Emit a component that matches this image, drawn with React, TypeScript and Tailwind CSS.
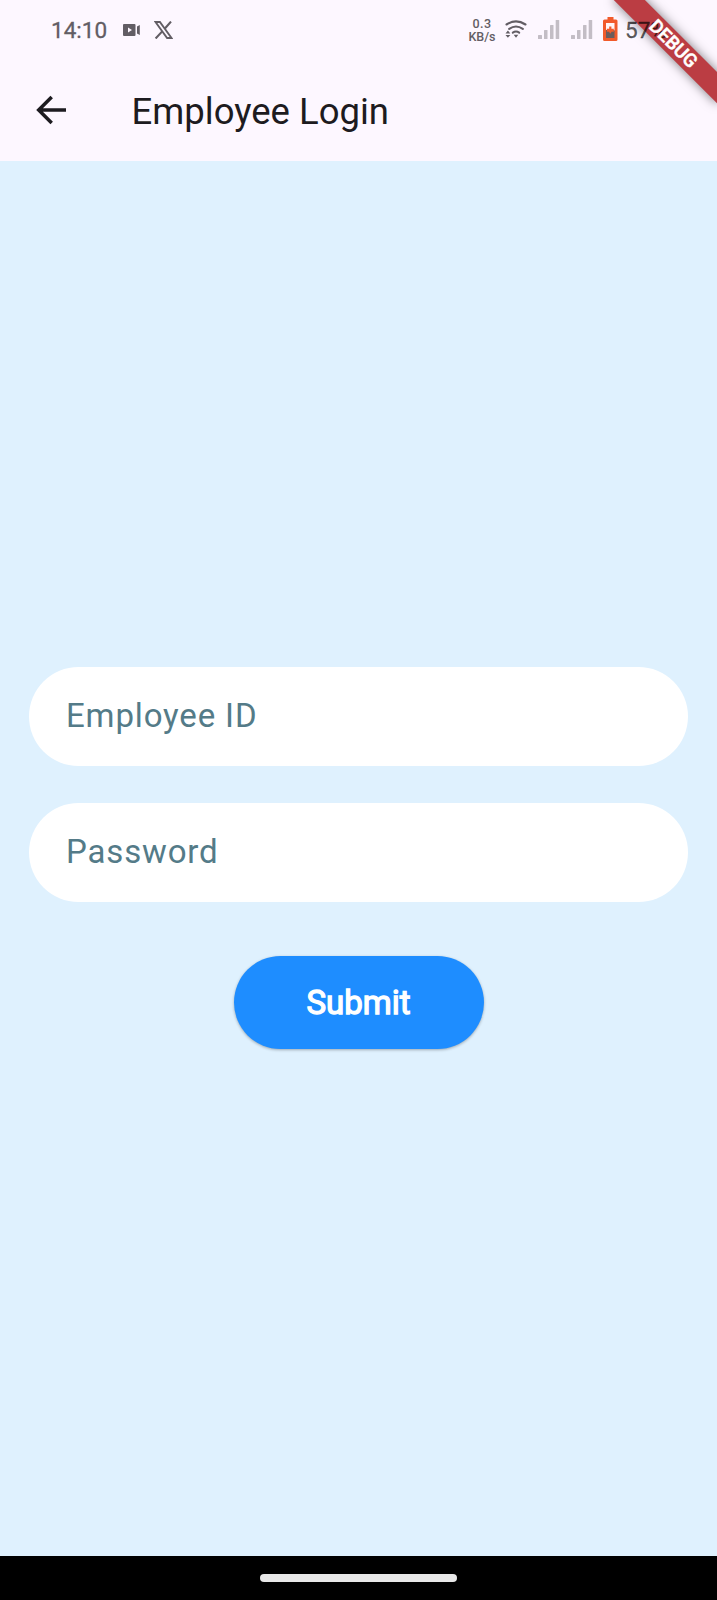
function VideoIcon() {
  return (
    <svg className="h-3 w-[18px]" viewBox="0 0 18 12" fill="currentColor">
      <path fillRule="evenodd" d="M1 0h10.500a1 1 0 0 1 1 1v10a1 1 0 0 1-1 1H1a1 1 0 0 1-1-1V1A1 1 0 0 1 1 0ZM5 3.500v5l4-2.500Z" />
      <path d="M14 2.500 16.800 1v10L14 9.500Z" />
    </svg>
  );
}

function XIcon() {
  return (
    <svg className="h-[18px] w-[19px]" viewBox="0 0 19 18" fill="none" stroke="currentColor">
      <path d="M1.500 1H5.900L17.500 17H13.100Z" strokeWidth="1.900" />
      <path d="M17 .600 10.700 7.700M8.200 10.400 1.600 17.500" strokeWidth="2.100" />
    </svg>
  );
}

function WifiIcon() {
  return (
    <svg className="h-[18px] w-[22px]" viewBox="0 0 22 18" fill="none" stroke="currentColor">
      <path d="M1.500 4.500Q11-1.700 20.500 4.500" strokeWidth="2.100" strokeLinecap="round" />
      <path d="M4.200 8.800Q11 4.200 17.800 8.800" strokeWidth="2.100" strokeLinecap="round" />
      <path d="M7.800 12.600Q11 10.400 14.200 12.600" strokeWidth="2.100" strokeLinecap="round" />
      <path d="M8.700 14.800h4.600L11 17.800ZM.500 13.400 2.900 10.500 5.300 13.400ZM.500 14.900h4.800L2.900 17.800Z" fill="currentColor" stroke="none" />
    </svg>
  );
}

function SignalIcon() {
  return (
    <svg className="h-[19px] w-[22px]" viewBox="0 0 22 19" fill="#c3bdc5">
      <rect x="0" y="15" width="4" height="4" rx=".5" />
      <rect x="6" y="10" width="3.500" height="9" rx=".5" />
      <rect x="12" y="5" width="3.500" height="14" rx=".5" />
      <rect x="17.700" y="0" width="3.500" height="19" rx=".5" />
    </svg>
  );
}

function BatteryIcon() {
  return (
    <svg className="h-6 w-[15px]" viewBox="0 0 15 24">
      <path d="M4.500 0h6v2.500H13A1.500 1.500 0 0 1 14.500 4v18.500A1.500 1.500 0 0 1 13 24H1.500A1.500 1.500 0 0 1 0 22.500V4a1.500 1.500 0 0 1 1.500-1.500h3Z" fill="#f15a2b" />
      <path d="M3 6h8.500v8H3Z" fill="#fff5f6" />
      <path d="M3 13h8.500v8H3Z" fill="#6b5b5c" />
      <path d="M6.200 9.500h2.200v2.300h2.400v3H8.600l-1.300 2-1.300-2H3.800v-3h2.400Z" fill="#f15a2b" />
    </svg>
  );
}

function BannerRibbon() {
  return (
    <div className="absolute top-0 right-0 h-[130px] w-[140px] overflow-hidden">
      <div className="absolute top-[51px] left-[67px] h-[22px] w-[146px] origin-[73px_-51px] rotate-45 bg-[#bb3d43] shadow-[0_0_11px_rgba(0,0,0,0.5)]" />
    </div>
  );
}

function BannerLabel() {
  return (
    <div className="pointer-events-none absolute top-0 right-0 z-20 h-[130px] w-[140px] overflow-hidden">
      <div className="absolute top-[51px] left-[67px] flex h-[22px] w-[146px] origin-[73px_-51px] rotate-45 items-center justify-center text-[18.6px] leading-none font-medium text-white [-webkit-text-stroke:0.5px_white]">
        DEBUG
      </div>
    </div>
  );
}

function StatusBar() {
  return (
    <div className="relative z-10 flex h-[60px] items-center pl-[51px] text-[#625d64]">
      <span className="w-[72px] text-[22.500px] leading-none [-webkit-text-stroke:0.3px_currentColor]">14:10</span>
      <VideoIcon />
      <span className="ml-[13px]"><XIcon /></span>
      <div className="ml-[295px] w-[28px] text-center text-[12.500px] leading-[13px] font-medium">
        <div className="tracking-[0.5px]">0.3</div>
        <div>KB/s</div>
      </div>
      <span className="mb-[2px] ml-[9px]"><WifiIcon /></span>
      <span className="mb-[1px] ml-[11px]"><SignalIcon /></span>
      <span className="mb-[1px] ml-[11px]"><SignalIcon /></span>
      <span className="mb-[2px] ml-[10px]"><BatteryIcon /></span>
      <span className="ml-[7px] text-[22.500px] leading-none text-black/65 [-webkit-text-stroke:0.3px_currentColor]">57%</span>
    </div>
  );
}

function Field({ label, type }: { label: string; type: string }) {
  return (
    <input
      type={type}
      placeholder={label}
      aria-label={label}
      className="block h-[99px] w-full rounded-full bg-white px-[37px] pb-[2px] text-[33px] tracking-[0.85px] text-[#37474f] outline-none placeholder:text-[#547b88]"
    />
  );
}

export default function App() {
  return (
    <div className="flex h-[1600px] w-[717px] flex-col overflow-hidden bg-[#dff1fe] font-[Roboto,sans-serif]">
      <header className="relative h-[161px] bg-[#fdf7ff]">
        <BannerRibbon />
        <StatusBar />
        <BannerLabel />
        <div className="flex h-[101px] items-center pl-[36px]">
          <button aria-label="Back" className="mb-[2px] text-[#1d1b20]">
            <svg className="h-[30px] w-[30px]" viewBox="0 0 30 30" fill="none" stroke="currentColor" strokeWidth="3.500">
              <path d="M30 15H3M15.700 2 2.700 15 15.700 28" />
            </svg>
          </button>
          <h1 className="mt-[3px] ml-[65.5px] text-[36.500px] leading-none text-[#1d1b20]">Employee Login</h1>
        </div>
      </header>
      <main className="flex flex-1 flex-col items-center px-[29px] pt-[506px]">
        <Field label="Employee ID" type="text" />
        <div className="mt-[36.5px] w-full">
          <Field label="Password" type="password" />
        </div>
        <button className="mt-[54.5px] h-[93px] w-[250px] rounded-full bg-[#1e8dff] pt-[1px] text-[33px] text-white shadow-[0_1px_3px_rgba(0,0,0,0.3)] [-webkit-text-stroke:1.3px_white]">
          Submit
        </button>
      </main>
      <footer className="flex h-11 items-center justify-center bg-black">
        <div className="h-2 w-[197px] rounded-full bg-[#e8e8e8]" />
      </footer>
    </div>
  );
}
